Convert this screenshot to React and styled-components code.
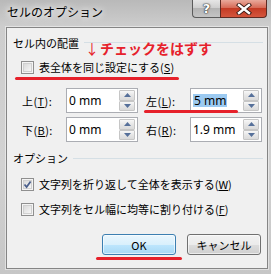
import React from 'react'
import styled, { createGlobalStyle } from 'styled-components';

const jpFont = '"Noto Sans CJK JP", "Noto Sans", sans-serif';
const red = '#e6212b';

const GlobalStyle = createGlobalStyle`
  body {
    margin: 0;
    font-family: ${jpFont};
    color: #000;
  }
`;

const Window = styled.div`
  width: 271px;
  height: 274px;
  box-sizing: border-box;
  padding: 0 3px 5px 6px;
  display: flex;
  flex-direction: column;
  background: linear-gradient(to bottom, #b9b9b9 0, #cdcdcd 26px, #d2d2d2 60%, #c6c6c6 100%);
  overflow: hidden;
`;

const TitleBar = styled.div`
  height: 27px;
  flex-shrink: 0;
  display: flex;
  align-items: flex-start;
`;

const Title = styled.div`
  flex: 1;
  padding: 3px 0 0 1px;
  font-size: 12px;
  line-height: 18px;
  text-shadow: 0 0 6px #fff, 0 0 10px #fff;
`;

const CaptionButtons = styled.div`
  display: flex;
  margin-right: 1px;
`;

const HelpButton = styled.div`
  width: 28px;
  height: 18px;
  box-sizing: border-box;
  border: 1px solid #5b5b5b;
  border-top: none;
  border-right: none;
  border-radius: 0 0 0 4px;
  background: linear-gradient(to bottom, #e6e6e6 0, #cfcfcf 45%, #b4b4b4 50%, #c4c4c4 100%);
  display: flex;
  align-items: center;
  justify-content: center;
  font-family: "DejaVu Sans", sans-serif;
  font-weight: bold;
  font-size: 13px;
  color: #fff;
  text-shadow: 0 0 1px #333, 0 0 1px #333, 0 0 2px #333;
`;

const CloseButton = styled.div`
  width: 47px;
  height: 18px;
  box-sizing: border-box;
  border: 1px solid #5e2a22;
  border-top: none;
  border-radius: 0 0 4px 0;
  background: linear-gradient(to bottom, #e9a99b 0, #d76b57 45%, #c43b24 50%, #d4563d 100%);
  display: flex;
  align-items: center;
  justify-content: center;
`;

const Client = styled.div`
  flex: 1;
  position: relative;
  border: 1px solid #858585;
  box-shadow: 0 0 0 1px rgba(255, 255, 255, 0.45);
  background: #f0f0f0;
  padding: 0 4px 0 6px;
  display: flex;
  flex-direction: column;
`;

const GroupHeader = styled.div`
  margin-top: ${p => p.$top}px;
  height: 16px;
  display: flex;
  align-items: center;
  font-size: 11px;
  line-height: 16px;
`;

const GroupLine = styled.div`
  flex: 1;
  height: 1px;
  margin-left: 5px;
  margin-top: ${p => p.$shift || 0}px;
  background: #d5dfe5;
`;

const CheckRow = styled.label`
  margin-top: ${p => p.$top}px;
  margin-left: 8px;
  height: 16px;
  display: flex;
  align-items: center;
  gap: 5px;
  font-size: 11px;
  line-height: 16px;
`;

const Box = styled.span`
  width: 13px;
  height: 13px;
  box-sizing: border-box;
  border: 1px solid #8f8f8f;
  padding: 1px;
  background: #f4f4f4;
  display: flex;
  flex-shrink: 0;
`;

const BoxInner = styled.span`
  flex: 1;
  border: 1px solid #d0d0d0;
  background: linear-gradient(135deg, #dadada 0, #f6f6f6 100%);
  position: relative;
  display: flex;
  align-items: center;
  justify-content: center;
`;

const Key = styled.span`
  text-decoration: underline;
`;

const Fields = styled.div`
  margin-top: 13px;
  margin-left: 9px;
  display: flex;
  flex-direction: column;
  gap: 4px;
`;

const FieldRow = styled.div`
  display: flex;
  gap: 8px;
`;

const Field = styled.div`
  display: flex;
  align-items: center;
`;

const FieldLabel = styled.span`
  width: 44px;
  font-size: 11px;
  letter-spacing: 0.4px;
`;

const SpinBox = styled.div`
  width: 72px;
  height: 25px;
  box-sizing: border-box;
  border: 1px solid #abadb3;
  background: #fff;
  display: flex;
  padding: 1px 2px 1px 1px;
`;

const Value = styled.div`
  flex: 1;
  display: flex;
  align-items: center;
  padding-left: 1px;
  font-family: "Noto Sans", sans-serif;
  font-size: 12px;
`;

const Selected = styled.span`
  background: #9ccaf1;
  line-height: 13px;
  padding: 0 1px;
`;

const Spin = styled.div`
  width: 16px;
  display: flex;
  flex-direction: column;
`;

const SpinButton = styled.div`
  flex: 1;
  border: 1px solid #c6c6c6;
  border-radius: 1px;
  background: linear-gradient(to bottom, #f7f7f7 0, #e6e6e6 50%, #dadada 100%);
  display: flex;
  align-items: center;
  justify-content: center;
`;

const ButtonRow = styled.div`
  margin-top: 17px;
  margin-right: 2px;
  display: flex;
  justify-content: flex-end;
  gap: 11px;
`;

const DialogButton = styled.button`
  width: 74px;
  height: 21px;
  padding: 0;
  border: 1px solid ${p => (p.$primary ? '#3c7fb1' : '#707070')};
  border-radius: 3px;
  background: ${p =>
    p.$primary
      ? 'linear-gradient(to bottom, #eaf6fd 0, #d9f0fc 50%, #bee6fd 51%, #a7d9f5 100%)'
      : 'linear-gradient(to bottom, #f2f2f2 0, #ebebeb 50%, #dddddd 51%, #cfcfcf 100%)'};
  box-shadow: inset 0 0 0 1px rgba(255, 255, 255, 0.6);
  font-family: ${jpFont};
  font-size: 11px;
  color: #000;
`;

const Note = styled.div`
  position: absolute;
  left: 78px;
  top: 12px;
  font-size: 14px;
  line-height: 16px;
  font-weight: bold;
  color: ${red};
  white-space: nowrap;
`;

const Arrow = styled.span`
  font-weight: normal;
  margin-right: 1px;
`;

const RedMark = styled.div`
  position: absolute;
  left: ${p => p.$left}px;
  top: ${p => p.$top}px;
  width: ${p => p.$width}px;
  height: 3px;
  border-radius: 2px;
  background: ${red};
`;

const Check = ({ checked, top, children }) => (
  <CheckRow $top={top}>
    <Box>
      <BoxInner>
        {checked && (
          <svg width="9" height="9" viewBox="0 0 9 9" style={{ position: 'absolute', left: -1, top: -1 }}>
            <path d="M1.5 4.5 L3.6 7 L7.6 1.5" fill="none" stroke="#4a5f8c" strokeWidth="1.8" />
          </svg>
        )}
      </BoxInner>
    </Box>
    <span>{children}</span>
  </CheckRow>
);

const Triangle = ({ down }) => (
  <svg width="7" height="4" viewBox="0 0 7 4">
    <path d={down ? 'M0 0 H7 L3.5 4 Z' : 'M0 4 H7 L3.5 0 Z'} fill="#56709a" />
  </svg>
);

const NumberField = ({ label, k, value, selected }) => (
  <Field>
    <FieldLabel>{label}(<Key>{k}</Key>):</FieldLabel>
    <SpinBox>
      <Value>{selected ? <Selected>{value}</Selected> : value}</Value>
      <Spin>
        <SpinButton><Triangle /></SpinButton>
        <SpinButton><Triangle down /></SpinButton>
      </Spin>
    </SpinBox>
  </Field>
);

const CellOptions = () => (
  <Window>
    <TitleBar>
      <Title>セルのオプション</Title>
      <CaptionButtons>
        <HelpButton>?</HelpButton>
        <CloseButton>
          <svg width="16" height="12" viewBox="0 0 16 12">
            <path d="M3 2 L13 10 M13 2 L3 10" stroke="#3a1a14" strokeWidth="4.2" strokeLinecap="square" />
            <path d="M3 2 L13 10 M13 2 L3 10" stroke="#fff" strokeWidth="2.4" strokeLinecap="square" />
          </svg>
        </CloseButton>
      </CaptionButtons>
    </TitleBar>
    <Client>
      <GroupHeader $top={7}>
        セル内の配置
        <GroupLine $shift={-2} />
      </GroupHeader>
      <Check top={8}>表全体を同じ設定にする(<Key>S</Key>)</Check>
      <Fields>
        <FieldRow>
          <NumberField label="上" k="T" value="0 mm" />
          <NumberField label="左" k="L" value="5 mm" selected />
        </FieldRow>
        <FieldRow>
          <NumberField label="下" k="B" value="0 mm" />
          <NumberField label="右" k="R" value="1.9 mm" />
        </FieldRow>
      </Fields>
      <GroupHeader $top={8}>
        オプション
        <GroupLine />
      </GroupHeader>
      <Check checked top={10}>文字列を折り返して全体を表示する(<Key>W</Key>)</Check>
      <Check top={9}>文字列をセル幅に均等に割り付ける(<Key>F</Key>)</Check>
      <ButtonRow>
        <DialogButton $primary>OK</DialogButton>
        <DialogButton>キャンセル</DialogButton>
      </ButtonRow>

      <Note><Arrow>↓</Arrow>チェックをはずす</Note>
      <RedMark $left={8} $top={49} $width={164} />
      <RedMark $left={137} $top={82} $width={94} />
      <RedMark $left={89} $top={229} $width={86} />
    </Client>
  </Window>
);

const App = () => (
  <>
    <GlobalStyle />
    <CellOptions />
  </>
);

export default App
